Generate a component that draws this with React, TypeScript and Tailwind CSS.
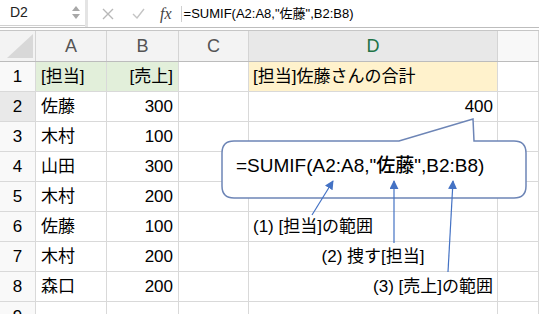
import React from 'react';

const font = "font-['Liberation_Sans','Noto_Sans_CJK_JP',sans-serif]";

interface Row {
  n: number;
  a: string;
  b: string;
  d: string;
  dAlign?: 'left' | 'center' | 'right';
  dFill?: boolean;
  fill?: boolean;
}

const rows: Row[] = [
  { n: 1, a: '[担当]', b: '[売上]', d: '[担当]佐藤さんの合計', fill: true, dFill: true },
  { n: 2, a: '佐藤', b: '300', d: '400', dAlign: 'right' },
  { n: 3, a: '木村', b: '100', d: '' },
  { n: 4, a: '山田', b: '300', d: '' },
  { n: 5, a: '木村', b: '200', d: '' },
  { n: 6, a: '佐藤', b: '100', d: '(1) [担当]の範囲', dAlign: 'left' },
  { n: 7, a: '木村', b: '200', d: '(2) 捜す[担当]', dAlign: 'center' },
  { n: 8, a: '森口', b: '200', d: '(3) [売上]の範囲', dAlign: 'right' },
  { n: 9, a: '', b: '', d: '' },
];

const cols = 'grid grid-cols-[36px_71px_72px_70px_249px_41px]';
const cell = 'h-[30px] border-r border-b border-[#d9d9d9] flex items-center text-[17px] text-black whitespace-nowrap';

const FormulaBar: React.FC = () => (
  <div className="flex h-[28px] border-b border-[#bdbdbd] bg-white">
    <div className="w-[85px] h-[26px] flex items-center justify-between pl-[10px] pr-[4px] border-b border-[#d0d0d0]">
      <span className="text-[14px] text-[#222]">D2</span>
      <div className="flex flex-col items-center gap-[3px] pr-[1px]">
        <svg width="8" height="5" viewBox="0 0 8 5"><path d="M0 5 L4 0 L8 5 Z" fill="#a8a8a8" /></svg>
        <svg width="8" height="5" viewBox="0 0 8 5"><path d="M0 0 L4 5 L8 0 Z" fill="#a8a8a8" /></svg>
      </div>
    </div>
    <div className="w-[3px] bg-[#e4e4e4]" />
    <div className="flex flex-1 items-center">
      <div className="w-[36px] flex justify-center ml-[2px]">
        <svg width="12" height="12" viewBox="0 0 12 12">
          <path d="M1 1 L11 11 M11 1 L1 11" stroke="#b8b8b8" strokeWidth="1.4" />
        </svg>
      </div>
      <div className="w-[24px] flex justify-center">
        <svg width="13" height="11" viewBox="0 0 13 11">
          <path d="M1 6 L5 10 L12 1" stroke="#c4c4c4" strokeWidth="1.4" fill="none" />
        </svg>
      </div>
      <span className="ml-[10px] font-['Liberation_Serif',serif] italic text-[16px] text-[#444]">fx</span>
      <div className="ml-[9px] w-px h-[16px] bg-[#d0d0d0]" />
      <span className="ml-[2px] text-[13px] text-black">=SUMIF(A2:A8,"佐藤",B2:B8)</span>
    </div>
  </div>
);

const Header: React.FC = () => {
  const letters = ['A', 'B', 'C', 'D', ''];
  return (
    <div className={`${cols} h-[32px] bg-[#f3f3f3] border-t border-[#c6c6c6] mt-[2px] border-b border-b-[#bcbcbc]`}>
      <div className="relative border-r border-[#d4d4d4]">
        <svg className="absolute right-[2px] bottom-[3px]" width="26" height="24" viewBox="0 0 26 24">
          <path d="M26 0 L26 24 L0 24 Z" fill="#d8d8d8" />
        </svg>
      </div>
      {letters.map((l, i) => (
        <div
          key={i}
          className={`flex items-center justify-center text-[18px] border-r border-[#d4d4d4] ${
            l === 'D' ? 'bg-[#e8e8e8] text-[#217346]' : l === '' ? 'bg-[#f8f8f8]' : 'text-[#555]'
          }`}
        >
          {l}
        </div>
      ))}
    </div>
  );
};

const App: React.FC = () => {
  return (
    <div className={`relative w-[539px] h-[314px] overflow-hidden bg-white ${font}`}>
      <FormulaBar />
      <Header />
      <div>
        {rows.map((r) => (
          <div key={r.n} className={cols}>
            <div
              className={`${cell} justify-center text-[#7a7a7a] ${
                r.n === 2 ? 'bg-[#e9e9e9] text-[#217346]' : 'bg-[#f9f9f9]'
              }`}
            >
              {r.n}
            </div>
            <div className={`${cell} pl-[5px] ${r.fill ? 'bg-[#e2efda]' : ''}`}>{r.a}</div>
            <div className={`${cell} justify-end pr-[5px] ${r.fill ? 'bg-[#e2efda]' : ''}`}>{r.b}</div>
            <div className={cell} />
            <div
              className={`${cell} px-[4px] ${r.dFill ? 'bg-[#fff2cc]' : ''} ${
                r.dAlign === 'right' ? 'justify-end' : r.dAlign === 'center' ? 'justify-center' : ''
              }`}
            >
              {r.d}
            </div>
            <div className={cell} />
          </div>
        ))}
      </div>

      <svg className="absolute left-0 top-0" width="539" height="314" viewBox="0 0 539 314">
        <defs>
          <marker id="head" viewBox="0 0 10 10" refX="9" refY="5" markerWidth="9" markerHeight="9" orient="auto-start-reverse" markerUnits="userSpaceOnUse">
            <path d="M0 0 L10 5 L0 10 Z" fill="#4472c4" />
          </marker>
        </defs>
        <path
          d="M234 141 L399 141 L473 119 L474 141 L514 141 Q526 141 526 153 L526 186 Q526 198 514 198 L234 198 Q222 198 222 186 L222 153 Q222 141 234 141 Z"
          fill="#ffffff"
          stroke="#6d85b6"
          strokeWidth="1.5"
        />
        <line x1="312" y1="215" x2="333" y2="181" stroke="#4472c4" strokeWidth="1.2" markerEnd="url(#head)" />
        <line x1="394" y1="243" x2="394" y2="181" stroke="#4472c4" strokeWidth="1.2" markerEnd="url(#head)" />
        <line x1="448" y1="272" x2="453" y2="181" stroke="#4472c4" strokeWidth="1.2" markerEnd="url(#head)" />
      </svg>
      <div className="absolute left-[236px] top-[154px] leading-[24px] text-[19px] font-medium text-black whitespace-nowrap">
        =SUMIF(A2:A8,"佐藤",B2:B8)
      </div>
    </div>
  );
};

export default App;
